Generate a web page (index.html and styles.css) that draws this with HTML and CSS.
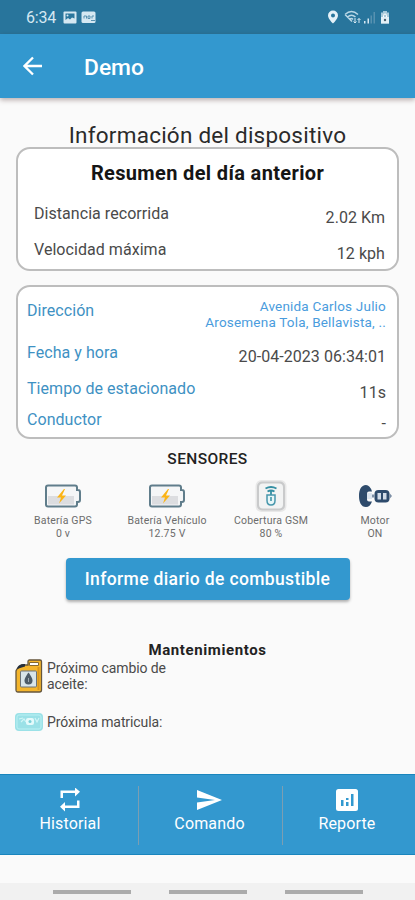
FILE: index.html
```
<!DOCTYPE html>
<html lang="es">

<head>
    <meta charset="UTF-8">
    <meta name="viewport" content="width=device-width, initial-scale=1.0">
    <title>Información del dispositivo</title>
    <link rel="stylesheet" href="styles.css">
</head>

<body>
    <div class="screen">
        <div class="status-bar">
            <div class="status-left">
                <span class="clock">6:34</span>
                <svg width="14" height="13" viewBox="0 0 14 13">
                    <rect x="0.5" y="0.5" width="13" height="12" rx="1" fill="#d5e8f2" />
                    <path d="M2.5 2.5h9v5l-2.5-1-2 2-2-1.500-2.500 2z" fill="#2a769d" />
                    <circle cx="4.500" cy="4.500" r="1" fill="#d5e8f2" />
                </svg>
                <svg width="16" height="13" viewBox="0 0 16 13">
                    <rect x="0.500" y="0.500" width="14" height="11.500" rx="1.500" fill="#d5e8f2" />
                    <path d="M3 7.500V5h2.500v2.500M7 5v2.500h2V5zM11 7.500V5h2M10 9.500h4" fill="none" stroke="#5791b0" />
                </svg>
            </div>
            <div class="status-right">
                <svg width="12" height="14" viewBox="0 0 12 14">
                    <path d="M6 .5a5 5 0 0 0-5 5C1 9 6 13.500 6 13.500S11 9 11 5.500a5 5 0 0 0-5-5zm0 3a2 2 0 1 1 0 4 2 2 0 0 1 0-4z" fill="#e4f1f8" />
                </svg>
                <svg class="wifi" width="17" height="14" viewBox="0 0 17 14">
                    <path d="M1 4.500Q7.500-1.500 14 4.500M3.500 7Q7.500 3.500 11.500 7M5.500 9.500Q7.500 7.500 9 9.500M1 4.500l7 7" fill="none" stroke="#b9d7e6" stroke-width="1.500" />
                    <path d="M11 8v5M9.500 11.500l1.500 1.500 1.500-1.500M15 13V8.500M13.500 10L15 8.500l1.500 1.500" fill="none" stroke="#d5e8f2" />
                </svg>
                <svg width="12" height="13" viewBox="0 0 12 13">
                    <path d="M0 10h1.500v2.500H0zM3.500 7.500H5v5H3.500z" fill="#d5e8f2" />
                    <path d="M6.500 4.500H8v8H6.500zM9.500 1H11v11.500H9.500z" fill="#5791b0" />
                </svg>
                <svg class="battery" width="10" height="14" viewBox="0 0 10 14">
                    <path d="M3 1h4v1.500h2v11H1v-11h2z" fill="#a9cbdc" />
                    <path d="M3.500 7V5.500a1.500 1.500 0 0 1 3 0V7" fill="none" stroke="#fff" />
                    <path d="M1 7h8v6.500H1z" fill="#e4f1f8" />
                    <circle cx="5" cy="10" r="1.200" fill="#47606f" />
                </svg>
            </div>
        </div>

        <div class="app-bar">
            <svg width="20" height="20" viewBox="0 0 20 20">
                <path d="M19 10H2M10 1.500L1.500 10l8.500 8.500" fill="none" stroke="#fff" stroke-width="2.300" />
            </svg>
            <div class="app-title">Demo</div>
        </div>

        <div class="content">
            <h1 class="page-title">Información del dispositivo</h1>

            <div class="card summary">
                <h2 class="card-title">Resumen del día anterior</h2>
                <div class="row">
                    <span class="label">Distancia recorrida</span>
                    <span class="value">2.02 Km</span>
                </div>
                <div class="row">
                    <span class="label">Velocidad máxima</span>
                    <span class="value">12 kph</span>
                </div>
            </div>

            <div class="card details">
                <div class="row address-row">
                    <span class="label">Dirección</span>
                    <span class="address">Avenida Carlos Julio<br>Arosemena Tola, Bellavista, ..</span>
                </div>
                <div class="row">
                    <span class="label">Fecha y hora</span>
                    <span class="value">20-04-2023 06:34:01</span>
                </div>
                <div class="row">
                    <span class="label">Tiempo de estacionado</span>
                    <span class="value">11s</span>
                </div>
                <div class="row driver-row">
                    <span class="label">Conductor</span>
                    <span class="value">-</span>
                </div>
            </div>

            <h3 class="section-title">SENSORES</h3>
            <div class="sensors">
                <div class="sensor">
                    <svg width="36" height="36" viewBox="0 0 36 36">
                        <path d="M3 7.500h27q2 0 2 2v2.500h1q2 0 2 2v8q0 2-2 2h-1v2.500q0 2-2 2H3q-2 0-2-2v-17q0-2 2-2z" fill="#f5f6f7" stroke="#607d8b" stroke-width="2" />
                        <path d="M3 18h26v8.500H3z" fill="#dcdde0" />
                        <path d="M19 11l-7 8.500h4l-2 6 7-8h-4l3-6.500z" fill="#fbb416" />
                    </svg>
                    <span>Batería GPS</span>
                    <span>0 v</span>
                </div>
                <div class="sensor">
                    <svg width="36" height="36" viewBox="0 0 36 36">
                        <path d="M3 7.500h27q2 0 2 2v2.500h1q2 0 2 2v8q0 2-2 2h-1v2.500q0 2-2 2H3q-2 0-2-2v-17q0-2 2-2z" fill="#f5f6f7" stroke="#607d8b" stroke-width="2" />
                        <path d="M3 18h26v8.500H3z" fill="#dcdde0" />
                        <path d="M19 11l-7 8.500h4l-2 6 7-8h-4l3-6.500z" fill="#fbb416" />
                    </svg>
                    <span>Batería Vehículo</span>
                    <span>12.75 V</span>
                </div>
                <div class="sensor">
                    <svg width="36" height="36" viewBox="0 0 36 36">
                        <rect x="2.500" y="2" width="31" height="32" rx="6" fill="#e8e8e8" />
                        <rect x="4" y="3.500" width="28" height="29" rx="5" fill="#c9cacb" />
                        <rect x="6" y="5.500" width="24" height="25" rx="4" fill="#f2f3f3" />
                        <path d="M12.500 10.500q5.500-3 11 0M14.500 13.500q3.500-2 7 0M18 12v5" fill="none" stroke="#348fa3" stroke-width="1.800" />
                        <path d="M14 17h8v5.500q0 4.500-4 4.500t-4-4.500z" fill="#e7f6f8" stroke="#4797ac" stroke-width="1.500" />
                        <path d="M18 19v4" stroke="#348fa3" stroke-width="1.500" />
                    </svg>
                    <span>Cobertura GSM</span>
                    <span>80 %</span>
                </div>
                <div class="sensor">
                    <svg width="36" height="36" viewBox="0 0 36 36">
                        <path d="M9 7C4 7 2 12 2 18s2 11 7 11q4 0 6-5.500h-3q-2 0-2-2v-6q0-2 2-2h3Q13 7 9 7z" fill="#2e4b6c" />
                        <path d="M10 15h5v6h-5z" fill="#dce5ef" />
                        <rect x="17.500" y="12" width="15" height="12.500" rx="4" fill="#2e4b6c" />
                        <path d="M20.500 15h3.500v6.500h-3.500zM26 15h3.500v6.500H26z" fill="#d1dbe7" />
                        <path d="M15 16.500h2.500v3H15zM32.500 15l2.500 3-2.500 3z" fill="#7d8fa5" />
                    </svg>
                    <span>Motor</span>
                    <span>ON</span>
                </div>
            </div>

            <button class="report-btn">Informe diario de combustible</button>

            <h3 class="section-title maintenance-title">Mantenimientos</h3>
            <div class="maintenance oil">
                <svg width="28" height="34" viewBox="0 0 28 34">
                    <path d="M2 10l5-4h6V2.500q0-1.500 1.500-1.500H25q1.500 0 1.500 1.500V31q0 2-2 2H3q-2 0-2-2V12z" fill="#f4b52c" stroke="#65563d" stroke-width="1.300" />
                    <path d="M14.500 3.500h9v3h-9z" fill="#fff" stroke="#856a32" />
                    <path d="M2 9q2-4.500 8-4v2.500L2 10z" fill="#26303d" />
                    <path d="M23.500 8v23" stroke="#d9951b" stroke-width="2" />
                    <rect x="5.500" y="12" width="16" height="16" rx="1" fill="#d8e5e9" stroke="#6b7377" />
                    <path d="M13.500 13.500s-4 5-4 8a4 4 0 0 0 8 0c0-3-4-8-4-8z" fill="#4d5c68" />
                    <path d="M13.500 19v4" stroke="#9ba9b1" />
                </svg>
                <span>Próximo cambio de<br>aceite:</span>
            </div>
            <div class="maintenance">
                <svg width="28" height="18" viewBox="0 0 28 18">
                    <rect x="0" y="0" width="28" height="18" rx="4" fill="#9be1e7" />
                    <rect x="2" y="2" width="24" height="14" rx="2" fill="none" stroke="#baf0f3" />
                    <path d="M4 6l4-1M6 9l3-3 2 3M20 5l2 4 2-4" fill="none" stroke="#d0f5f7" stroke-width="1.200" />
                    <rect x="11" y="5" width="8" height="7" rx="2" fill="#e4fafb" />
                    <circle cx="15" cy="8.500" r="1.500" fill="#7bd0d8" />
                </svg>
                <span>Próxima matricula:</span>
            </div>
        </div>

        <div class="bottom-nav">
            <div class="nav-item history">
                <svg width="24" height="24" viewBox="0 0 24 24">
                    <path d="M5 5h12v3.500l5-4.750L17-.5V2.500H2.500V10H5zM19 17.500H7V14l-5 4.750L7 23.500V20h14.500v-7.500H19z" fill="#fff" />
                </svg>
                <span>Historial</span>
            </div>
            <div class="nav-item">
                <svg width="27" height="24" viewBox="0 0 27 24">
                    <path d="M1 22L26 12 1 2v7.500L19 12 1 14.500z" fill="#fff" />
                </svg>
                <span>Comando</span>
            </div>
            <div class="nav-item">
                <svg width="24" height="24" viewBox="0 0 24 24">
                    <rect x="1" y="1" width="22" height="22" rx="2.500" fill="#fff" />
                    <path d="M6 12h2.500v6H6zM11 14h2.500v4H11zM11 10h2.500v2H11zM16 6h2.500v12H16z" fill="#3399cf" />
                </svg>
                <span>Reporte</span>
            </div>
        </div>

        <div class="system-nav">
            <div class="pill"></div>
            <div class="pill"></div>
            <div class="pill"></div>
        </div>
    </div>
</body>

</html>
```
FILE: styles.css
```
* {
    box-sizing: border-box;
}

body {
    font-family: Roboto, "Liberation Sans", sans-serif;
    margin: 0;
    padding: 0;
    background-color: #fafafa;
    color: #4a4a4a;
}

svg {
    display: block;
    flex-shrink: 0;
}

h1,
h2,
h3 {
    margin: 0;
}

.screen {
    display: flex;
    flex-direction: column;
    width: 415px;
    height: 900px;
    overflow: hidden;
}

.status-bar {
    display: flex;
    justify-content: space-between;
    align-items: center;
    height: 34px;
    padding: 0 25px 0 26px;
    background-color: #28759c;
}

.status-left,
.status-right {
    display: flex;
    align-items: center;
}

.clock {
    width: 37px;
    font-size: 16px;
    letter-spacing: -0.2px;
    color: #d5e8f2;
}

.status-left svg + svg {
    margin-left: 4px;
}

.status-right {
    gap: 3px;
}

.wifi {
    margin-left: 2px;
}

.battery {
    margin-left: 1px;
}

.app-bar {
    display: flex;
    align-items: center;
    height: 64px;
    padding-left: 23px;
    background-color: #3398cf;
    box-shadow: 0 2px 5px rgba(60, 30, 30, 0.35);
}

.app-title {
    margin: 2px 0 0 41px;
    font-size: 22.8px;
    font-weight: 500;
    color: #fff;
}

.content {
    display: flex;
    flex-direction: column;
    height: 676px;
    padding: 24px 16px 0;
}

.page-title {
    height: 25px;
    line-height: 27px;
    font-size: 22.5px;
    font-weight: 400;
    letter-spacing: 0.23px;
    text-align: center;
    color: #2a2a2a;
}

.card {
    border: 2px solid #bdbdbd;
    border-radius: 14px;
    background-color: #fff;
}

.summary {
    height: 124px;
    padding: 10px 12px 0 16px;
}

.card-title {
    height: 37px;
    margin-left: -4px;
    line-height: 28px;
    font-size: 20px;
    font-weight: 700;
    letter-spacing: 0.35px;
    text-align: center;
    color: #151515;
}

.row {
    display: flex;
    justify-content: space-between;
    height: 36px;
    line-height: 36px;
    font-size: 16px;
    letter-spacing: 0.05px;
}

.row .value {
    padding-top: 4px;
}

.details {
    height: 154px;
    margin-top: 14px;
    padding: 6px 11px 0 9px;
}

.details .label {
    color: #3e91c3;
}

.details .address-row {
    height: 42px;
}

.address {
    padding-top: 5px;
    line-height: 16px;
    font-size: 13.5px;
    letter-spacing: 0.2px;
    text-align: right;
    color: #4a9cdd;
}

.details .driver-row {
    height: 30px;
    line-height: 25px;
}

.section-title {
    height: 39px;
    line-height: 41px;
    font-size: 15.5px;
    font-weight: 500;
    letter-spacing: 0.4px;
    text-align: center;
    color: #222;
}

.sensors {
    display: grid;
    grid-template-columns: repeat(4, 104px);
    margin: 0 -16px 0 -5px;
}

.sensor {
    display: flex;
    flex-direction: column;
    align-items: center;
    line-height: 13px;
    font-size: 10.5px;
    letter-spacing: 0.2px;
    color: #6c6c6c;
}

.report-btn {
    align-self: center;
    width: 284px;
    height: 42px;
    margin-top: 18px;
    padding: 0;
    border: none;
    border-radius: 4px;
    background-color: #3398cf;
    box-shadow: 0 2px 3px rgba(0, 0, 0, 0.3);
    font-family: inherit;
    font-size: 17.5px;
    font-weight: 500;
    letter-spacing: 0.36px;
    color: #fff;
}

.maintenance-title {
    height: 21px;
    margin-top: 39px;
    line-height: 23px;
    font-size: 15px;
    font-weight: 700;
    letter-spacing: 0.6px;
}

.maintenance {
    display: flex;
    align-items: center;
    gap: 4px;
    height: 34px;
    margin-left: -1px;
    line-height: 16px;
    font-size: 14px;
    letter-spacing: -0.1px;
}

.oil {
    margin-top: -1px;
    margin-bottom: 12px;
}

.bottom-nav {
    display: flex;
    height: 81px;
    border-top: 1px solid #1985bd;
    border-bottom: 1px solid #1985bd;
    background-color: #3398cf;
}

.nav-item {
    display: flex;
    flex-direction: column;
    align-items: center;
    width: 144px;
    height: 59px;
    margin-top: 11px;
    padding: 2px 2px 0 0;
    border-left: 1px solid #7c9eb2;
    font-size: 16px;
    letter-spacing: 0.15px;
    line-height: 23px;
    color: #fff;
}

.history {
    width: 138px;
    padding: 2px 0 0 2px;
    border-left: none;
}

.nav-item:last-child {
    width: 133px;
    padding-right: 4px;
}

.system-nav {
    display: flex;
    justify-content: center;
    gap: 38px;
    height: 17px;
    margin-top: 28px;
    padding-top: 7px;
    background-color: #f1f1f1;
}

.pill {
    width: 78px;
    height: 4px;
    background-color: #ababab;
}
```
